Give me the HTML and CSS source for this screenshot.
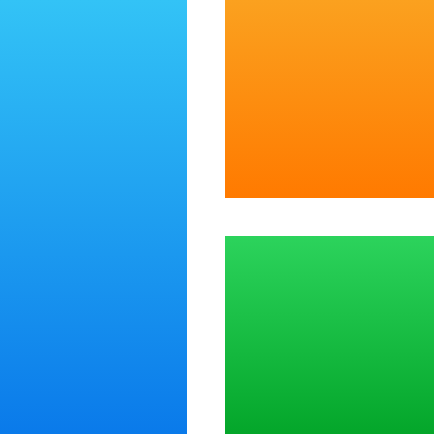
FILE: index.html
```html
<!DOCTYPE html>
<html lang="en">
<head>
<meta charset="utf-8">
<title>Layout</title>
<link rel="stylesheet" href="styles.css">
</head>
<body>
<main class="mosaic">
  <div class="tile tile-blue"></div>
  <div class="tile tile-orange"></div>
  <div class="tile tile-green"></div>
</main>
</body>
</html>
```
FILE: styles.css
```css
html, body {
  margin: 0;
  padding: 0;
  background: #fff;
}
.mosaic {
  display: grid;
  width: 434px;
  height: 434px;
  grid-template-columns: 187px 209px;
  grid-template-rows: 198px 198px;
  column-gap: 38px;
  row-gap: 38px;
}
.tile-blue {
  grid-row: 1 / span 2;
  background: linear-gradient(180deg, #33c3f6 0%, #0a7aea 100%);
}
.tile-orange {
  background: linear-gradient(180deg, #fba11f 0%, #ff7a00 100%);
}
.tile-green {
  background: linear-gradient(180deg, #2cd35c 0%, #04a62a 100%);
}
```
